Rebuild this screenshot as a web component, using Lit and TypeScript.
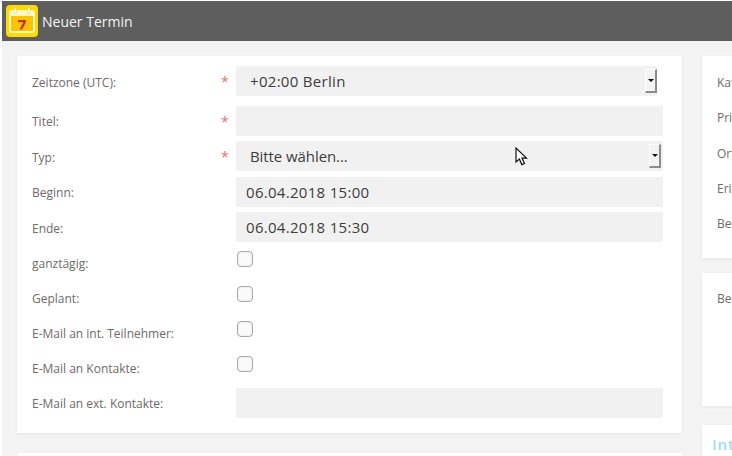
import { LitElement, html, css, nothing } from 'lit';
import { customElement } from 'lit/decorators.js';

type Row = { label: string; kind: 'select' | 'input' | 'check'; value?: string; req?: boolean; cls: string };

const rows: Row[] = [
  { label: 'Zeitzone (UTC):', kind: 'select', value: '+02:00 Berlin', req: true, cls: 'narrow low num' },
  { label: 'Titel:', kind: 'input', req: true, cls: 'gap10' },
  { label: 'Typ:', kind: 'select', value: 'Bitte wählen...', req: true, cls: 'gap5 low tight' },
  { label: 'Beginn:', kind: 'input', value: '06.04.2018 15:00', cls: 'gap6 num' },
  { label: 'Ende:', kind: 'input', value: '06.04.2018 15:30', cls: 'gap5 low num' },
  { label: 'ganztägig:', kind: 'check', cls: '' },
  { label: 'Geplant:', kind: 'check', cls: '' },
  { label: 'E-Mail an int. Teilnehmer:', kind: 'check', cls: '' },
  { label: 'E-Mail an Kontakte:', kind: 'check', cls: '' },
  { label: 'E-Mail an ext. Kontakte:', kind: 'input', cls: 'gap6' },
];

const sideLabels = ['Kategorie:', 'Priorität:', 'Ort:', 'Erinnerung:', 'Beschreibung:'];

@customElement('app-root')
export class AppRoot extends LitElement {
  static styles = css`
    :host {
      display: block;
      width: 732px;
      height: 456px;
      overflow: hidden;
      position: relative;
      background: #fff;
      font-family: 'Open Sans', sans-serif;
    }
    .page {
      margin: 1px 0 0 2px;
      height: 455px;
      background: #f3f3f3;
      overflow: hidden;
    }
    .header {
      height: 40px;
      background: #5e5e5e;
      display: flex;
      align-items: center;
      gap: 4px;
      padding-left: 4px;
      color: #f4f4f4;
      font-size: 14px;
    }
    .logo { display: block; width: 32px; height: 32px; }
    .main {
      display: grid;
      grid-template-columns: 665px 200px;
      column-gap: 20px;
      padding: 15px 0 0 15px;
    }
    .col { display: flex; flex-direction: column; }
    .card {
      background: #fff;
      box-shadow: 0 1px 3px rgba(0, 0, 0, 0.06);
    }
    .form { height: 377px; padding: 10px 19px 0 15px; box-sizing: border-box; }
    .next { margin-top: 20px; height: 40px; }
    .row {
      display: grid;
      grid-template-columns: 189px 15px 1fr;
      align-items: center;
      min-height: 30px;
      font-size: 12px;
      color: #6e6a68;
    }
    .row.gap10 { margin-top: 10px; }
    .row.gap5 { margin-top: 5px; }
    .row.gap6 { margin-top: 6px; }
    .row.low .lbl { padding-top: 2px; }
    .row.check { height: 35px; }
    .row.check .lbl { padding-top: 8px; }
    .req { color: #e57373; font-size: 14px; line-height: 14px; position: relative; top: 1px; }
    .field {
      height: 30px;
      box-sizing: border-box;
      background: #f1f1f1;
      color: #3d3d3d;
      font-size: 15px;
      line-height: 30px;
      padding-left: 10px;
    }
    .row.num .field { letter-spacing: 0.3px; }
    .row.tight .field { letter-spacing: -0.08px; }
    .row.low .field { line-height: 31px; }
    .select {
      display: flex;
      justify-content: space-between;
      align-items: center;
      padding-left: 14px;
      padding-right: 2px;
    }
    .narrow .field { margin-right: 6px; padding-right: 0; }
    .btn {
      width: 12px;
      height: 24px;
      box-sizing: border-box;
      background: #f3f3f3;
      border: 1px solid;
      border-color: #fff #8c8c8c #8c8c8c #fff;
      border-width: 1px 2px 2px 1px;
      display: flex;
      align-items: center;
      justify-content: center;
    }
    .btn i {
      width: 0;
      height: 0;
      border: 3px solid transparent;
      border-top: 3px solid #111;
      border-bottom: 0;
    }
    .box {
      width: 16px;
      height: 16px;
      margin-left: 1px;
      margin-top: -1px;
      box-sizing: border-box;
      border: 1px solid #a9a9a9;
      border-radius: 4px;
      background: #fafafa;
      box-shadow: inset 0 0 2px rgba(0, 0, 0, 0.12);
    }
    .side1 { height: 202px; padding: 9px 0 0 15px; box-sizing: border-box; }
    .side2 { height: 133px; margin-top: 15px; padding: 17px 0 0 15px; box-sizing: border-box; }
    .side3 {
      height: 40px;
      margin-top: 19px;
      padding: 9px 0 0 10px;
      box-sizing: border-box;
      color: #a0d8f5;
      font-size: 15px;
      font-weight: 600;
      letter-spacing: 1px;
    }
    .slabel { font-size: 12px; color: #6e6a68; height: 35.25px; line-height: 35px; white-space: nowrap; }
    .slabel.single { height: auto; line-height: 18px; }
    .cursor { position: absolute; left: 515px; top: 147px; width: 14px; height: 20px; }
  `;

  private renderControl(r: Row) {
    if (r.kind === 'check') return html`<div class="box"></div>`;
    if (r.kind === 'select') {
      return html`<div class="field select"><span>${r.value}</span><span class="btn"><i></i></span></div>`;
    }
    return html`<div class="field">${r.value ?? nothing}</div>`;
  }

  render() {
    return html`
      <div class="page">
        <div class="header">
          <svg class="logo" viewBox="0 0 32 32">
            <rect width="32" height="32" rx="4" fill="#ffd900" />
            <rect x="3" y="5" width="26" height="23" rx="2.5" fill="#fff6c8" />
            <rect x="5" y="11" width="22" height="15" fill="#fcc400" />
            <rect x="8" y="2.5" width="2.4" height="6" rx="1.2" fill="#fff" stroke="#f0c800" stroke-width="0.5" />
            <rect x="21.6" y="2.5" width="2.4" height="6" rx="1.2" fill="#fff" stroke="#f0c800" stroke-width="0.5" />
            <path d="M12 15h8v1.9l-3.8 7.6h-2.6l3.6-7.2H12z" fill="#c8352a" />
          </svg>
          <span>Neuer Termin</span>
        </div>
        <div class="main">
          <div class="col">
            <div class="card form">
              ${rows.map(
                (r) => html`
                  <div class="row ${r.cls} ${r.kind === 'check' ? 'check' : ''}">
                    <span class="lbl">${r.label}</span>
                    <span class="req">${r.req ? '*' : nothing}</span>
                    ${this.renderControl(r)}
                  </div>
                `
              )}
            </div>
            <div class="card next"></div>
          </div>
          <div class="col">
            <div class="card side1">
              ${sideLabels.map((s) => html`<div class="slabel">${s}</div>`)}
            </div>
            <div class="card side2"><div class="slabel single">Bemerkung:</div></div>
            <div class="card side3">Interne Teilnehmer</div>
          </div>
        </div>
      </div>
      <svg class="cursor" viewBox="0 0 14 20">
        <path d="M1 1v14l3.4-3 2.4 5.6 2.6-1.1-2.4-5.4H11.5z" fill="#fff" stroke="#111" stroke-width="1.2" stroke-linejoin="miter" />
      </svg>
    `;
  }
}
